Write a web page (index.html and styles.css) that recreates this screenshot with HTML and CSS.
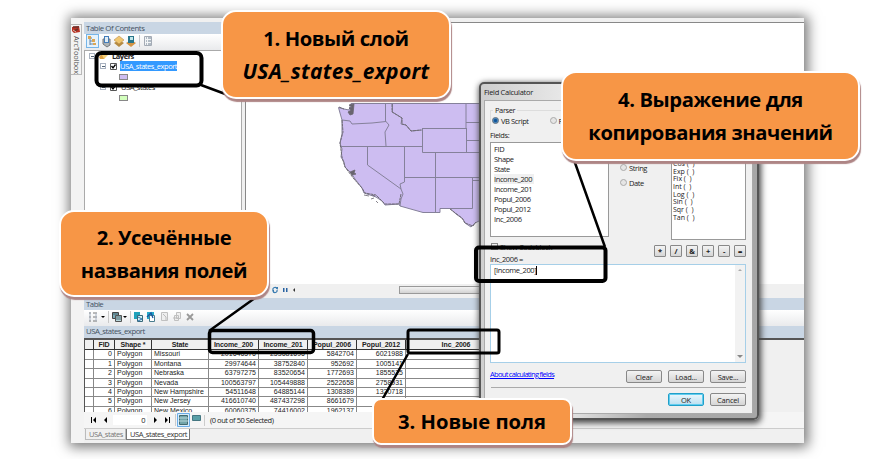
FILE: index.html
```html
<!DOCTYPE html>
<html lang="ru">
<head>
<meta charset="utf-8">
<title>USA_states_export</title>
<link rel="stylesheet" href="styles.css">
</head>
<body>
<main class="window">
  <aside class="rail"><div class="rail-tab">
    <svg width="10" height="9" viewBox="0 0 10 9"><path d="M1 2 8 1 9 7 3 8 1 6Z" fill="#b83022"/><path d="M2 2h6M3 6 7 4" stroke="#69302b" stroke-width="1.5"/><path d="M2 5 5 7" stroke="#f0b3a1"/></svg>
    <span>ArcToolbox</span></div></aside>
  <div class="content">
    <div class="upper">
      <section class="toc">
        <h2 class="bar toc-title">Table Of Contents</h2>
        <div class="tools">
          <svg width="70" height="15" viewBox="0 0 70 15">
            <rect x=".5" y=".5" width="12" height="13" fill="#e5f2fc" stroke="#76b5e8"/>
            <path d="M4 3v8M4 4h2M4 7h5M4 10h5" stroke="#6383a6" fill="none"/><path d="M2 2h3v3H2zM6 5h3v3H6zM7 9h3v2H7z" fill="#dba653"/>
            <path d="M17 5v5l4 3 3-2V5z" fill="#aeb4b7" stroke="#74777a"/><path d="M18 2h5v7h-5z" fill="#447dba"/><path d="M19 3h3v5h-3z" fill="#e1edf5"/>
            <path d="m28 9 5-3 5 3-5 4z" fill="#b58a42"/><path d="m28 6 5-4 5 4-5 4z" fill="#f0c66f" stroke="#ba8d49" stroke-width=".6"/>
            <path d="m40 9 5-3 5 3-5 4z" fill="#d49445"/><path d="M42 2h6v7h-6z" fill="#27758a"/><path d="M44 3h3v3h-3z" fill="#bfe5e9"/>
            <path d="M53.500 1v12" stroke="#c5c8cc"/><path d="M58.500 2.500h7v9h-7z" fill="#f2f4f6" stroke="#a4abb5"/><path d="M60 4h1M60 7h1M60 10h1M62 4h3M62 7h3M62 10h3" stroke="#6f8092"/>
          </svg>
        </div>
        <div class="tree">
          <div class="node root"><i class="exp"></i><svg width="9" height="8" viewBox="0 0 9 8"><path d="m0 5 4-4 4 1-3 5H1z" fill="#dca042"/><path d="m3 3 4-2 2 2-4 4z" fill="#f5cf78"/></svg><b>Layers</b></div>
          <div class="node"><i class="exp"></i><svg class="check" width="7" height="7" viewBox="0 0 7 7"><path d="M.5.5h6v6h-6z" fill="#fff" stroke="#555"/><path d="m1.500 3 1.500 2 2.500-3.500" fill="none" stroke="#000" stroke-width="1.300"/></svg><span class="selected">USA_states_export</span></div>
          <div class="swatch violet"></div>
          <div class="node second"><i class="exp"></i><svg class="check" width="7" height="7" viewBox="0 0 7 7"><path d="M.5.5h6v6h-6z" fill="#fff" stroke="#555"/><path d="m1.500 3 1.500 2 2.500-3.500" fill="none" stroke="#000" stroke-width="1.300"/></svg><span>USA_states</span></div>
          <div class="swatch green"></div>
        </div>
      </section>
      <section class="map">
        <svg class="states" width="557" height="261" viewBox="246 23 557 261">
          <g fill="#cdbdf1" stroke="#85819a" stroke-width="1" stroke-linejoin="round">
            <path d="M338.500 107.500 344 109 349 110 351 103.500H520V236L484 224 479 221 475 223 471 227 465 223 463 219 456 214 450 208.500H440V212.500H423L400 206 399 204 385 205 382 201 376 197 364 193 362 188 355 179 351 173 345 167 344 162 341 157 342 149 340 143 342 134V120L340 113Z"/>
            <path fill="none" d="M342 120 350 121 352 124 372 123 386 121.500M385.500 103V121L389 125 385 132 386 146M341 146.500H422M392.500 103V112L402 118 401 124 406 125 411 131 422 130M422.500 128V152.500H520M422 128.500H466V103M466 122.500H520M466.500 128V152M466 140.500H520M367.500 146V165L401 189M404.500 147V182L400 184 401 189 403 194 401 199 400 206M404 177.500H520M435.500 152V212M472.500 177V208.500H450M472 180.500H520"/>
          </g>
          <path d="m349 105 5-1-1 10-3 1-2-3 3-2-2-2 3-1zM350 172l5-2-1 3 2 1-4 1zM364 195l5 1M371 199l3-1M376 201l2 2M372 195l3 1" fill="#68646e" stroke="#68646e" stroke-width=".8"/>
          <path d="M339 107 344 109M342 120 343 132 340 143 342 157 345 167 354 179 362 188 365 193 376 195 385 204 399 204 401 194M392 104V112L402 118V124L406 125 411 131 421 130M450 209 462 218 465 223 473 226 476 222" fill="none" stroke="#6f6b76" stroke-dasharray="3 .6"/>
        </svg>
        <div class="map-scroll"><svg width="30" height="8" viewBox="0 0 30 8"><path d="M2 4a2 2 0 0 1 4-1M6 4a2 2 0 0 1-4 1" fill="none" stroke="#397bb0" stroke-width="1.200"/><path d="M5 1h2v3zM1 4h2v3z" fill="#397bb0"/><path d="M12 2h1.500v4H12zm3 0h1.500v4H15z" fill="#2862a1"/><path d="m24 2-2 2 2 2z" fill="#333"/></svg><div class="scroll-thumb"></div></div>
      </section>
    </div>
    <section class="tablepane">
      <h2 class="bar table-title">Table</h2>
      <div class="tools table-tools">
        <svg width="115" height="14" viewBox="0 0 115 14">
          <path d="M4 3h8M4 7h8M4 11h8" stroke="#777" stroke-dasharray="2 2 4"/><path d="M5 2v9M11 3v8" stroke="#a8b2c1"/><path d="m16 6 2 2 2-2zM38 6l2 2 2-2z"/>
          <path d="M23.500 1v12M45.500 1v12" stroke="#c8c8c8"/><path d="M27.500 2.500h6v6h-6z" fill="#7aaab6" stroke="#444"/><path d="M30.500 5.500h6v6h-6z" fill="#b8d6db" stroke="#555"/><path d="M31 7h5M31 9h5M28 4h5" stroke="#44646d"/>
          <path d="M49 2h6v7h-6z" fill="#20a2bb"/><path d="M52.500 5.500h5v6h-5z" fill="#d8f2f5" stroke="#38697b"/><path d="m53 7 4 2-4 2" stroke="#2870ad" fill="none"/>
          <path d="M62 2h7v7h-7z" fill="#27aaca"/><path d="M64.500 5.500h5v6h-5z" fill="#fff" stroke="#4a7d8e"/><path d="m62 7 4-4 2 5" stroke="#1855a0" fill="none" stroke-width="1.300"/>
          <path d="M76.500 2.500h6v8h-6zM89.500 5.500h4v5h-4zM91.500 2.500h4v6h-4z" fill="#efefef" stroke="#c0c0c0"/><path d="m78 4 3 3v3M88 8h6" stroke="#bbb" fill="none"/><path d="m102 4 6 6m0-6-6 6" stroke="#999" stroke-width="1.800"/>
        </svg>
      </div>
      <h3 class="bar layer-title">USA_states_export</h3>
      <div class="grid-area">
        <table>
          <colgroup><col class="c0"><col class="c1"><col class="c2"><col class="c3"><col class="c4"><col class="c5"><col class="c6"><col class="c7"><col class="c8"></colgroup>
          <thead><tr><th></th><th>FID</th><th>Shape *</th><th>State</th><th>Income_200</th><th>Income_201</th><th>Popul_2006</th><th>Popul_2012</th><th>Inc_2006</th></tr></thead>
          <tbody>
            <tr><td></td><td>0</td><td>Polygon</td><td>Missouri</td><td>201646576</td><td>253681696</td><td>5842704</td><td>6021988</td><td></td></tr>
            <tr><td></td><td>1</td><td>Polygon</td><td>Montana</td><td>29974644</td><td>38752840</td><td>952692</td><td>1005141</td><td></td></tr>
            <tr><td></td><td>2</td><td>Polygon</td><td>Nebraska</td><td>63797275</td><td>83520654</td><td>1772693</td><td>1855525</td><td></td></tr>
            <tr><td></td><td>3</td><td>Polygon</td><td>Nevada</td><td>100563797</td><td>105449888</td><td>2522658</td><td>2758931</td><td></td></tr>
            <tr><td></td><td>4</td><td>Polygon</td><td>New Hampshire</td><td>54511648</td><td>64885144</td><td>1308389</td><td>1320718</td><td></td></tr>
            <tr><td></td><td>5</td><td>Polygon</td><td>New Jersey</td><td>416610740</td><td>487437298</td><td>8661679</td><td></td><td></td></tr>
            <tr><td></td><td>6</td><td>Polygon</td><td>New Mexico</td><td>60060375</td><td>74416002</td><td>1962137</td><td></td><td></td></tr>
          </tbody>
        </table>
      </div>
      <div class="nav">
        <svg width="20" height="8" viewBox="0 0 20 8"><path d="M1 1h1v6H1zM6 1v6L3 4zM17 1v6l-3-3z"/></svg>
        <span class="record">0</span>
        <svg width="20" height="8" viewBox="0 0 20 8"><path d="M2 1v6l3-3zM13 1v6l3-3zM17 1h1v6h-1z"/></svg>
        <svg width="32" height="14" viewBox="0 0 32 14"><path d="M.500 1v12M29.500 2v11" stroke="#ccc"/><path d="M2.500.5h12v13h-12z" fill="#d8edfb" stroke="#6caee8"/><path d="M4.500 2.500h8v9h-8z" fill="#73a5aa" stroke="#446b70"/><path d="M4 5h9M4 8h9" stroke="#b8d7d9"/><path d="M17.500 2.500h8v5h-8z" fill="#599fa7" stroke="#447681"/></svg>
        <span class="status">(0 out of 50 Selected)</span>
      </div>
      <div class="tabs"><span>USA_states</span><span class="active">USA_states_export</span></div>
    </section>
  </div>
</main>

<section class="dialog">
  <h2>Field Calculator</h2>
  <div class="client">
    <div class="dlg-top">
      <div class="left-col">
        <fieldset><legend>Parser</legend><label class="radio on"><i></i>VB Script</label><label class="radio python"><i></i>Python</label></fieldset>
        <div class="fields-label">Fields:</div>
        <ul class="fields"><li>FID</li><li>Shape</li><li>State</li><li><span>Income_200</span></li><li>Income_201</li><li>Popul_2006</li><li>Popul_2012</li><li>Inc_2006</li></ul>
      </div>
      <div class="type-col"><label class="radio"><i></i>String</label><label class="radio"><i></i>Date</label></div>
      <div class="func-col"><ul class="functions"><li>Cos (&nbsp; )</li><li>Exp (&nbsp; )</li><li>Fix (&nbsp; )</li><li>Int (&nbsp; )</li><li>Log (&nbsp; )</li><li>Sin (&nbsp; )</li><li>Sqr (&nbsp; )</li><li>Tan (&nbsp; )</li></ul></div>
    </div>
    <div class="code-row"><label class="box"><i></i>Show Codeblock</label><div class="ops"><b>*</b><b>/</b><b>&amp;</b><b>+</b><b>-</b><b>=</b></div></div>
    <div class="expr-label">Inc_2006 =</div>
    <div class="expr"><span>[Income_200]</span><div class="vscroll"><svg width="6" height="4" viewBox="0 0 6 4"><path d="m1 3 2-2 2 2z" fill="#aaa"/></svg><svg width="6" height="4" viewBox="0 0 6 4"><path d="m0 0 3 3 3-3z" fill="#888"/></svg></div></div>
    <div class="action-row"><a>About calculating fields</a><button>Clear</button><button>Load...</button><button>Save...</button></div>
    <div class="final-row"><button class="ok">OK</button><button>Cancel</button></div>
  </div>
</section>

<svg class="marks" width="875" height="459" viewBox="0 0 875 459" fill="none" stroke="#000">
  <g stroke-width="4"><rect x="96.500" y="53" width="105" height="32.500" rx="5"/><rect x="209.500" y="330.500" width="104" height="22" rx="3" stroke-width="3.500"/><rect x="408" y="330" width="91" height="23" rx="2" stroke-width="3"/><rect x="476" y="247.500" width="129.500" height="33.500" rx="3"/></g>
  <path d="M201 85 228 95M209 331 262 293M408 354 382 400M574 160 605 247" stroke-width="2.500"/>
</svg>
<div class="callout one"><span>1. Новый слой</span><em>USA_states_export</em></div>
<div class="callout two"><span>2. Усечённые</span><span>названия полей</span></div>
<div class="callout three"><span>3. Новые поля</span></div>
<div class="callout four"><span>4. Выражение для</span><span>копирования значений</span></div>
</body>
</html>
```
FILE: styles.css
```css
* { box-sizing: border-box; }
body { margin: 0; width: 875px; height: 459px; overflow: hidden; background: #fff; color: #222; font: 7.5px/10px "Open Sans", sans-serif; letter-spacing: -.45px; position: relative; }
h2, h3, ul { margin: 0; padding: 0; font: inherit; list-style: none; }
svg { display: block; flex: none; }
.window { display: flex; width: 733px; height: 425px; margin: 18px 0 0 71px; background: #f0f0f0; box-shadow: 1px 1px 12px 3px #777; overflow: hidden; position: relative; }
.rail { width: 13px; padding-top: 6px; background: #f3f3f3; flex: none; }
.rail-tab { width: 11px; height: 51px; border: 1px solid #b9b9b9; border-left: 0; display: flex; flex-direction: column; align-items: center; gap: 2px; }
.rail-tab span { writing-mode: vertical-rl; font-size: 7.5px; line-height: 9px; letter-spacing: -.15px; color: #555; white-space: nowrap; }
.content { width: 720px; padding-top: 4px; display: flex; flex-direction: column; }
.upper { display: flex; height: 273px; }
.toc { width: 158px; border-right: 1px solid #aaa; }
.bar { background: #c9d6e4; color: #44515f; height: 12px; line-height: 12px; padding-left: 2px; font-size: 7.8px; letter-spacing: -.5px; }
.toc-title { letter-spacing: -.4px; }
.tools { height: 16px; background: linear-gradient(#fff, #e9eaec); padding: 0 2px; }
.tree { background: #fff; height: 245px; border: 1px solid #aaa; border-right: 0; }
.node { display: flex; align-items: center; gap: 4px; height: 10px; padding-left: 15px; }
.node.root { padding-left: 4px; }
.node.second { margin-top: 1px; }
.exp { width: 6px; height: 6px; border: 1px solid #a9b2c0; background: linear-gradient(#567, #567) center/3px 1px no-repeat; }
.selected { background: #3399ff; color: #fff; line-height: 10px; padding: 0; margin-left: -1px; }
.swatch { width: 9px; height: 6px; margin: 3px 0 2px 34px; border: 1px solid #888; }
.violet { background: #cdbdf1; }
.green { background: #d3ffbd; }
.map { flex: 1; margin-left: 3px; border: 1px solid #888; border-width: 1px 0 0 1px; background: #fff; }
.map-scroll { height: 11px; display: flex; align-items: center; padding-left: 25px; background: #f0f0f0; }
.scroll-thumb { height: 8px; width: 200px; margin-left: 98px; background: linear-gradient(#f3f3f3, #d3d3d3); border: 1px solid #999; }
.tablepane { margin-top: 3px; }
.table-tools { height: 16px; padding: 0 1px; }
.layer-title { height: 12px; line-height: 11px; }
.grid-area { height: 74px; overflow: hidden; border: 1px solid #555; border-width: 2px 0 0 1px; background: #f0f0f0; }
table { border-collapse: separate; border-spacing: 0; table-layout: fixed; width: 422px; background: #fff; font: 7px/8px "Liberation Sans", sans-serif; letter-spacing: 0; color: #222; }
tr { height: 9.4px; }
th, td { border: 1px solid #888; border-width: 0 1px 1px 0; height: 9.4px; padding: 0 2px; line-height: 8.400px; text-align: right; white-space: nowrap; }
th { text-align: center; background: #f0f0f0; border-color: #333; padding: 1px 0 0; font-size: 7px; letter-spacing: -.1px; }
td:nth-child(3), td:nth-child(4) { text-align: left; }
.c0 { width: 9px; } .c1 { width: 21px; } .c2 { width: 37px; } .c3 { width: 57px; } .c4 { width: 50px; } .c5, .c6, .c7 { width: 49px; } .c8 { width: 101px; }
.nav { height: 16px; display: flex; align-items: center; background: #f5f5f5; padding-left: 6px; position: relative; }
.record { width: 34px; height: 10px; margin-left: 3px; padding-right: 2px; background: #fff; text-align: right; font-size: 7.5px; }
.nav svg:nth-of-type(2) { margin-left: 5px; }
.nav svg:nth-of-type(3) { margin-left: 3px; }
.status { margin-left: 3px; white-space: nowrap; }
.tabs { display: flex; padding-left: 1px; height: 14px; border-top: 1px solid #ccc; color: #777; }
.tabs span { height: 11px; padding: 0 2px 0 3px; border: 1px solid #bbb; border-top: 0; line-height: 10px; }
.tabs .active { background: #fff; color: #333; border-color: #777; }

.dialog { position: absolute; left: 479px; top: 82px; width: 280px; height: 338px; border: 2px solid #555; border-radius: 5px; background: linear-gradient(90deg, #cecece, #e8e8e8 30%, #aaa 60%, #a7a7a7); box-shadow: 1px 2px 6px 1px #444; padding: 2px 4px 4px 3px; font-size: 7.5px; letter-spacing: -.4px; }
.dialog h2 { height: 14px; line-height: 12px; letter-spacing: -.3px; }
.client { background: #f0f0f0; height: 314px; padding: 5px 6px; border: 1px solid #aaa; }
.dlg-top { display: flex; height: 134px; }
.left-col { width: 118px; }
fieldset { margin: 0 0 0 -1px; border: 1px solid #ddd; border-bottom: 0; padding: 0 0 0 1px; height: 24px; display: flex; }
legend { margin-left: 1px; line-height: 9px; padding: 0 2px; }
.radio { display: flex; align-items: center; gap: 2px; height: 11px; }
.radio i { width: 7px; height: 7px; border: 1px solid #aaa; border-radius: 50%; background: #e5e5e5; }
.radio.on i { background: radial-gradient(#159 35%, #adf); border-color: #567; }
.python { margin-left: 21px; }
.fields-label { height: 11px; line-height: 11px; margin-left: -1px; }
.fields { height: 95px; margin: 1px 0 0 -1px; background: #fff; border: 1px solid #999; padding: 1px 3px; overflow: hidden; }
.fields li { height: 10px; line-height: 10px; }
.fields span { background: #f0f0f0; padding-right: 2px; }
.type-col { width: 62px; padding: 54px 0 0 11px; }
.type-col .radio { height: 15px; }
.func-col { flex: 1; }
.functions { height: 134px; background: #fff; border: 1px solid #999; padding: 53px 1px 0; font-size: 7px; letter-spacing: 0; }
.functions li { height: 7.700px; line-height: 7.700px; }
.code-row { display: flex; justify-content: space-between; height: 16px; padding-top: 3px; }
.box { display: flex; gap: 2px; line-height: 8px; }
.box i { width: 7px; height: 7px; border: 1px solid #888; background: #eee; }
.ops { display: flex; gap: 4px; margin-top: 2px; }
.ops b, button { border: 1px solid #888; border-radius: 1px; background: linear-gradient(#f3f3f3, #d5d5d5); color: #222; font: 7.5px/10px "Open Sans", sans-serif; letter-spacing: -.2px; text-align: center; }
.ops b { width: 12px; height: 12px; flex: none; font-weight: bold; }
.expr-label { height: 8px; line-height: 7px; margin-left: -1px; }
.expr { display: flex; justify-content: space-between; height: 99px; margin: 0 0 0 -1px; border: 1px solid #a6cfe8; background: #fff; padding-left: 3px; }
.expr span { border-right: 1px solid #000; height: 9px; line-height: 9px; margin-top: 1px; }
.vscroll { width: 10px; background: #f2f2f2; display: flex; flex-direction: column; align-items: center; justify-content: space-between; padding: 3px 0; }
.action-row { display: flex; gap: 6px; margin-top: 7px; height: 18px; border-bottom: 1px solid #aaa; }
.action-row a { margin: 0 auto 0 -1px; color: #00f; text-decoration: underline; line-height: 8px; letter-spacing: -.7px; }
button { width: 36px; height: 13px; padding: 0; border-radius: 2px; }
.final-row { display: flex; justify-content: flex-end; gap: 6px; margin-top: 5px; }
.ok { border: 1px solid #209fc9; background: linear-gradient(#eaf7fd, #bbdff0); box-shadow: inset 0 0 0 1px #62cdef; }

.marks { position: absolute; left: 0; top: 0; }
.callout { position: absolute; display: flex; flex-direction: column; align-items: center; justify-content: center; background: #f79646; border: 2px solid #fff; border-radius: 15px; box-shadow: 1px 3px 1px #ae8585; color: #000; font: bold 20.2px/33px "Open Sans", sans-serif; letter-spacing: -.4px; white-space: nowrap; }
.callout em { font-size: 21px; letter-spacing: .3px; }
.one { left: 221px; top: 10px; width: 230px; height: 89px; }
.two { left: 59px; top: 210px; width: 210px; height: 87px; }
.three { left: 372px; top: 398px; width: 200px; height: 47px; border-radius: 9px; letter-spacing: 0; }
.four { left: 561px; top: 71px; width: 299px; height: 90px; }
```
